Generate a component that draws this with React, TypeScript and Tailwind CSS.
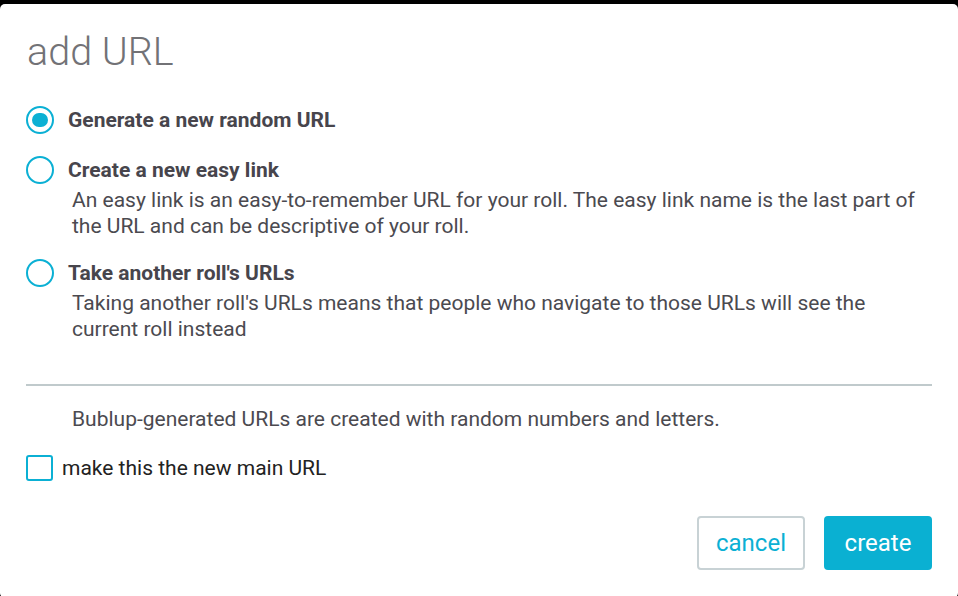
import React, { useState } from "react";

const options = [
  {
    id: "random",
    label: "Generate a new random URL",
    description: "",
  },
  {
    id: "easy",
    label: "Create a new easy link",
    description:
      "An easy link is an easy-to-remember URL for your roll. The easy link name is the last part of the URL and can be descriptive of your roll.",
  },
  {
    id: "take",
    label: "Take another roll's URLs",
    description:
      "Taking another roll's URLs means that people who navigate to those URLs will see the current roll instead",
  },
];

function Radio({ checked }: { checked: boolean }) {
  return (
    <span className="w-[28px] h-[28px] rounded-full border-2 border-[#0bb0d4] flex items-center justify-center shrink-0">
      {checked && <span className="w-[16px] h-[14px] rounded-full bg-[#0bb0d4]" />}
    </span>
  );
}

export default function App() {
  const [selected, setSelected] = useState("random");
  const [main, setMain] = useState(false);

  return (
    <div className="h-[596px] bg-black pt-[4px] overflow-hidden font-['Roboto',sans-serif]">
      <div className="h-[594px] bg-white rounded-[5px] px-[26px] pt-[24px]">
        <h1 className="pl-[1px] text-[39.5px] leading-[48px] font-light text-[#727276]">add URL</h1>

        <div className="mt-[28px] flex flex-col gap-[18px]">
          {options.map((o) => (
            <div key={o.id} className="cursor-pointer" onClick={() => setSelected(o.id)}>
              <div className="flex items-center gap-[14px]">
                <Radio checked={selected === o.id} />
                <span className="text-[21px] leading-[32px] font-bold text-[#47454c]">{o.label}</span>
              </div>
              {o.description && (
                <p className="mt-[1px] pl-[46px] pr-[10px] text-[21px] leading-[26px] text-[#4b4a50]">
                  {o.description}
                </p>
              )}
            </div>
          ))}
        </div>

        <div className="mt-[42px] h-[2px] bg-[#c0cacc]" />

        <p className="mt-[20px] pl-[46px] text-[21px] leading-[26px] text-[#4b4a50]">
          Bublup-generated URLs are created with random numbers and letters.
        </p>

        <label className="mt-[23px] flex items-center gap-[9px] cursor-pointer" onClick={() => setMain(!main)}>
          <span className="w-[27px] h-[26px] rounded-[3px] border-2 border-[#0bb0d4] shrink-0" />
          <span className="text-[21px] leading-[26px] text-[#222222]">make this the new main URL</span>
        </label>

        <div className="mt-[35px] flex justify-end gap-[19px]">
          <button className="w-[108px] h-[54px] rounded-[4px] border-2 border-[#c8d2d5] text-[24px] text-[#0bb0d4]">
            cancel
          </button>
          <button className="w-[108px] h-[54px] rounded-[4px] bg-[#0ab0d2] text-[24px] text-white">
            create
          </button>
        </div>
      </div>
    </div>
  );
}
